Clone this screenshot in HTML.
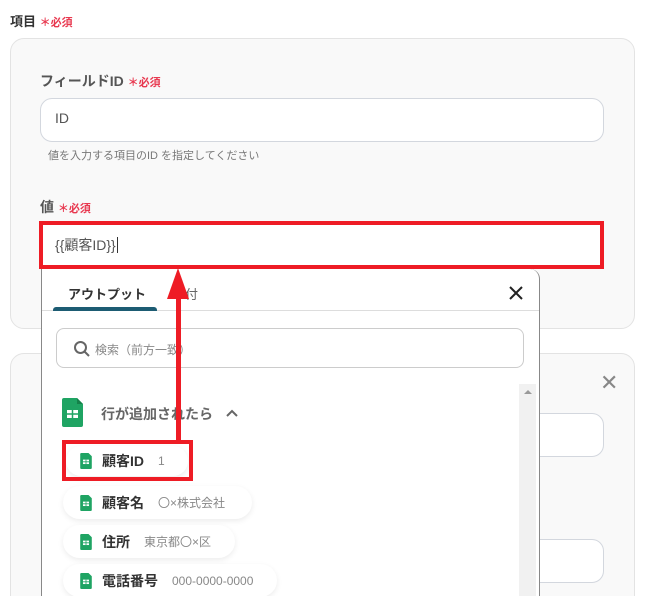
<!DOCTYPE html>
<html style="width:645px;height:596px;overflow:hidden"><head><meta charset="utf-8"><style>
*{box-sizing:border-box;margin:0;padding:0}
body{width:645px;height:596px;overflow:hidden;background:#fff;font-family:"Liberation Sans","Noto Sans CJK JP",sans-serif}
#w{position:relative;width:645px;height:596px;overflow:hidden}
.a{position:absolute}
.req{color:#e8384f;font-size:11px;font-weight:bold}
.card{position:absolute;left:10px;width:625px;background:#f9f9f9;border:1px solid #e3e3e3;border-radius:14px}
.inp{position:absolute;background:#fff;border:1px solid #d3d7de;border-radius:12px}
.lbl{position:absolute;font-size:14px;font-weight:bold;color:#555}
.pill{position:absolute;background:#fff;border-radius:17px;box-shadow:0 2px 6px rgba(0,0,0,.08);height:33px;display:flex;align-items:center;padding-left:17px;font-size:14px;font-weight:bold;color:#333}
.pill small{font-size:12px;font-weight:normal;color:#888;margin-left:14px}
.sh{width:12px;height:16px;margin-right:10px;flex:none}
</style></head><body><div id="w">
<div class="a" style="left:10px;top:11px;font-size:13px;font-weight:bold;color:#333">項目 <span class="req">＊必須</span></div>
<div class="card" style="top:38px;height:291px"></div>
<div class="lbl" style="left:40px;top:71px">フィールドID <span class="req">＊必須</span></div>
<div class="inp" style="left:40px;top:98px;width:564px;height:44px"></div>
<div class="a" style="left:55px;top:110px;font-size:14px;color:#555">ID</div>
<div class="a" style="left:48px;top:147px;font-size:11px;color:#777">値を入力する項目のID を指定してください</div>
<div class="lbl" style="left:40px;top:197px">値 <span class="req">＊必須</span></div>
<div class="a" style="left:39px;top:221px;width:565px;height:48px;border:4px solid #ee1c25;background:#fff"></div>
<div class="a" style="left:55px;top:235px;font-size:14px;color:#555">{{顧客ID}}<span style="border-left:1px solid #333;margin-left:1px"></span></div>

<div class="card" style="top:353px;height:260px"></div>
<div class="a" style="left:600px;top:374px;font-size:22px;color:#888;line-height:18px">✕</div>
<div class="inp" style="left:520px;top:413px;width:84px;height:44px"></div>
<div class="inp" style="left:520px;top:539px;width:84px;height:44px"></div>

<div class="a" style="left:41px;top:269px;width:499px;height:340px;background:#fff;border:1px solid #888;border-top:none;border-bottom:none;border-radius:0 10px 0 0"></div>
<div class="a" style="left:68px;top:284px;font-size:13px;font-weight:bold;color:#333">アウトプット</div>
<div class="a" style="left:185px;top:284px;font-size:13px;color:#666">付</div>
<div class="a" style="left:42px;top:310px;width:497px;height:1px;background:#ddd"></div>
<div class="a" style="left:53px;top:307px;width:104px;height:4px;background:#1d5c73;border-radius:3px 3px 0 0"></div>
<svg class="a" style="left:508px;top:285px" width="16" height="16"><path d="M2 2L14 14M14 2L2 14" stroke="#222" stroke-width="2"/></svg>
<div class="a" style="left:56px;top:328px;width:468px;height:40px;border:1px solid #ccc;border-radius:8px"></div>
<svg class="a" style="left:73px;top:340px" width="18" height="18"><circle cx="7.5" cy="7.5" r="5.5" fill="none" stroke="#666" stroke-width="2"/><path d="M11.5 11.5L16 16" stroke="#666" stroke-width="2"/></svg>
<div class="a" style="left:95px;top:341px;font-size:12px;color:#888">検索（前方一致）</div>
<div class="a" style="left:519px;top:384px;width:17px;height:212px;background:#f1f1f1"></div>
<div class="a" style="left:524px;top:390px;border:4px solid transparent;border-bottom:4px solid #999;border-top:none;width:0"></div>
<svg class="a" style="left:62px;top:398px" width="21" height="29"><path d="M0 2Q0 0 2 0H15L21 6V27Q21 29 19 29H2Q0 29 0 27Z" fill="#1fa463"/><path d="M15 0V6H21Z" fill="#15814a"/><rect x="5" y="12" width="11" height="8" fill="#fff"/><path d="M5 16H16M10.5 12V20" stroke="#1fa463" stroke-width="1.5"/></svg>
<div class="a" style="left:101px;top:404px;font-size:14px;font-weight:bold;color:#666">行が追加されたら</div>
<svg class="a" style="left:226px;top:408px" width="12" height="10"><path d="M1 8L6 3L11 8" fill="none" stroke="#666" stroke-width="2"/></svg>

<div class="pill" style="left:63px;top:486px;width:189px"><svg class="sh" viewBox="0 0 21 29"><path d="M0 2Q0 0 2 0H15L21 6V27Q21 29 19 29H2Q0 29 0 27Z" fill="#1fa463"/><rect x="5" y="12" width="11" height="8" fill="#fff"/><path d="M5 16H16M10.5 12V20" stroke="#1fa463" stroke-width="1.5"/></svg>顧客名<small>〇×株式会社</small></div>
<div class="pill" style="left:63px;top:525px;width:172px"><svg class="sh" viewBox="0 0 21 29"><path d="M0 2Q0 0 2 0H15L21 6V27Q21 29 19 29H2Q0 29 0 27Z" fill="#1fa463"/><rect x="5" y="12" width="11" height="8" fill="#fff"/><path d="M5 16H16M10.5 12V20" stroke="#1fa463" stroke-width="1.5"/></svg>住所<small>東京都〇×区</small></div>
<div class="pill" style="left:63px;top:564px;width:214px"><svg class="sh" viewBox="0 0 21 29"><path d="M0 2Q0 0 2 0H15L21 6V27Q21 29 19 29H2Q0 29 0 27Z" fill="#1fa463"/><rect x="5" y="12" width="11" height="8" fill="#fff"/><path d="M5 16H16M10.5 12V20" stroke="#1fa463" stroke-width="1.5"/></svg>電話番号<small>000-0000-0000</small></div>
<div class="pill" style="left:66px;top:446px;width:122px;height:30px;padding-left:14px"><svg class="sh" viewBox="0 0 21 29"><path d="M0 2Q0 0 2 0H15L21 6V27Q21 29 19 29H2Q0 29 0 27Z" fill="#1fa463"/><rect x="5" y="12" width="11" height="8" fill="#fff"/><path d="M5 16H16M10.5 12V20" stroke="#1fa463" stroke-width="1.5"/></svg>顧客ID<small>1</small></div>
<div class="a" style="left:62px;top:440px;width:131px;height:41px;border:4px solid #ee1c25"></div>
<div class="a" style="left:176px;top:290px;width:5px;height:152px;background:#ee1c25"></div>
<svg class="a" style="left:166px;top:268px" width="24" height="32"><path d="M12 0L23 31H1Z" fill="#ee1c25"/></svg>
</div></body></html>
